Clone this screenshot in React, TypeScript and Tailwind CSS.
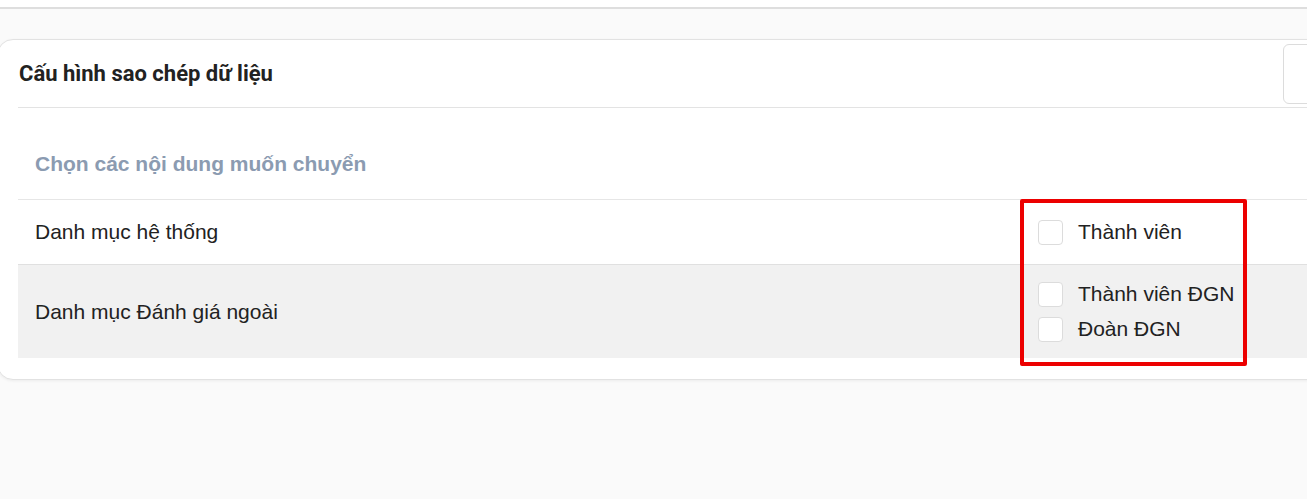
import React from 'react';

const rows = [
    { label: 'Danh mục hệ thống', options: ['Thành viên'], height: 'h-[64px]', shaded: false },
    { label: 'Danh mục Đánh giá ngoài', options: ['Thành viên ĐGN', 'Đoàn ĐGN'], height: 'h-[94px]', shaded: true },
];

function Checkbox({ label }: { label: string }) {
    return (
        <label className="flex items-center gap-[15px] h-[25px] cursor-pointer">
            <span className="w-[25px] h-[25px] rounded-[4px] border border-[#dcdcdc] bg-white shrink-0" />
            <span className="text-[21px] text-[#222]">{label}</span>
        </label>
    );
}

export default function App() {
    return (
        <div className="min-h-[499px] bg-[#fafafa] overflow-hidden font-['Liberation_Sans',Arial,sans-serif]">
            {/* top strip */}
            <div className="h-[9px] bg-white border-b-2 border-[#dedede]" />

            {/* Card */}
            <div className="mt-[30px] ml-[-3px] w-[1370px] bg-white border border-[#e2e2e2] rounded-2xl shadow-[0_1px_3px_rgba(0,0,0,0.06)] pl-[20px] pr-[18px] pb-[21px]">
                {/* Header */}
                <div className="flex items-center justify-between h-[68px] border-b border-[#e3e3e3]">
                    <h2 className="text-[22px] font-bold text-[#222] font-['Roboto',sans-serif] pl-px">Cấu hình sao chép dữ liệu</h2>
                    <div className="w-[60px] h-[60px] mr-[5px] rounded-[6px] border border-[#dcdcdc] bg-white" />
                </div>

                {/* Section title */}
                <div className="pl-[17px] pt-[44px] pb-[23px]">
                    <h3 className="text-[21px] leading-[24px] font-bold text-[#8b9bb1]">Chọn các nội dung muốn chuyển</h3>
                </div>

                {/* Table */}
                <div className="relative border-t border-[#e6e6e6]">
                    {rows.map((row, i) => (
                        <div
                            key={i}
                            className={`flex items-center ${row.height} ${i > 0 ? 'border-t border-[#e0e0e0]' : ''} ${row.shaded ? 'bg-[#f1f1f1]' : 'bg-white'}`}
                        >
                            <div className="w-[1020px] pl-[17px] text-[21px] text-[#222]">{row.label}</div>
                            <div className="flex flex-col gap-[10px]">
                                {row.options.map(opt => (
                                    <Checkbox key={opt} label={opt} />
                                ))}
                            </div>
                        </div>
                    ))}

                    {/* highlight annotation */}
                    <div className="absolute left-[1002px] top-[-1px] w-[227px] h-[167px] border-4 border-[#ec0000] rounded-[2px] pointer-events-none" />
                </div>
            </div>
        </div>
    );
}
